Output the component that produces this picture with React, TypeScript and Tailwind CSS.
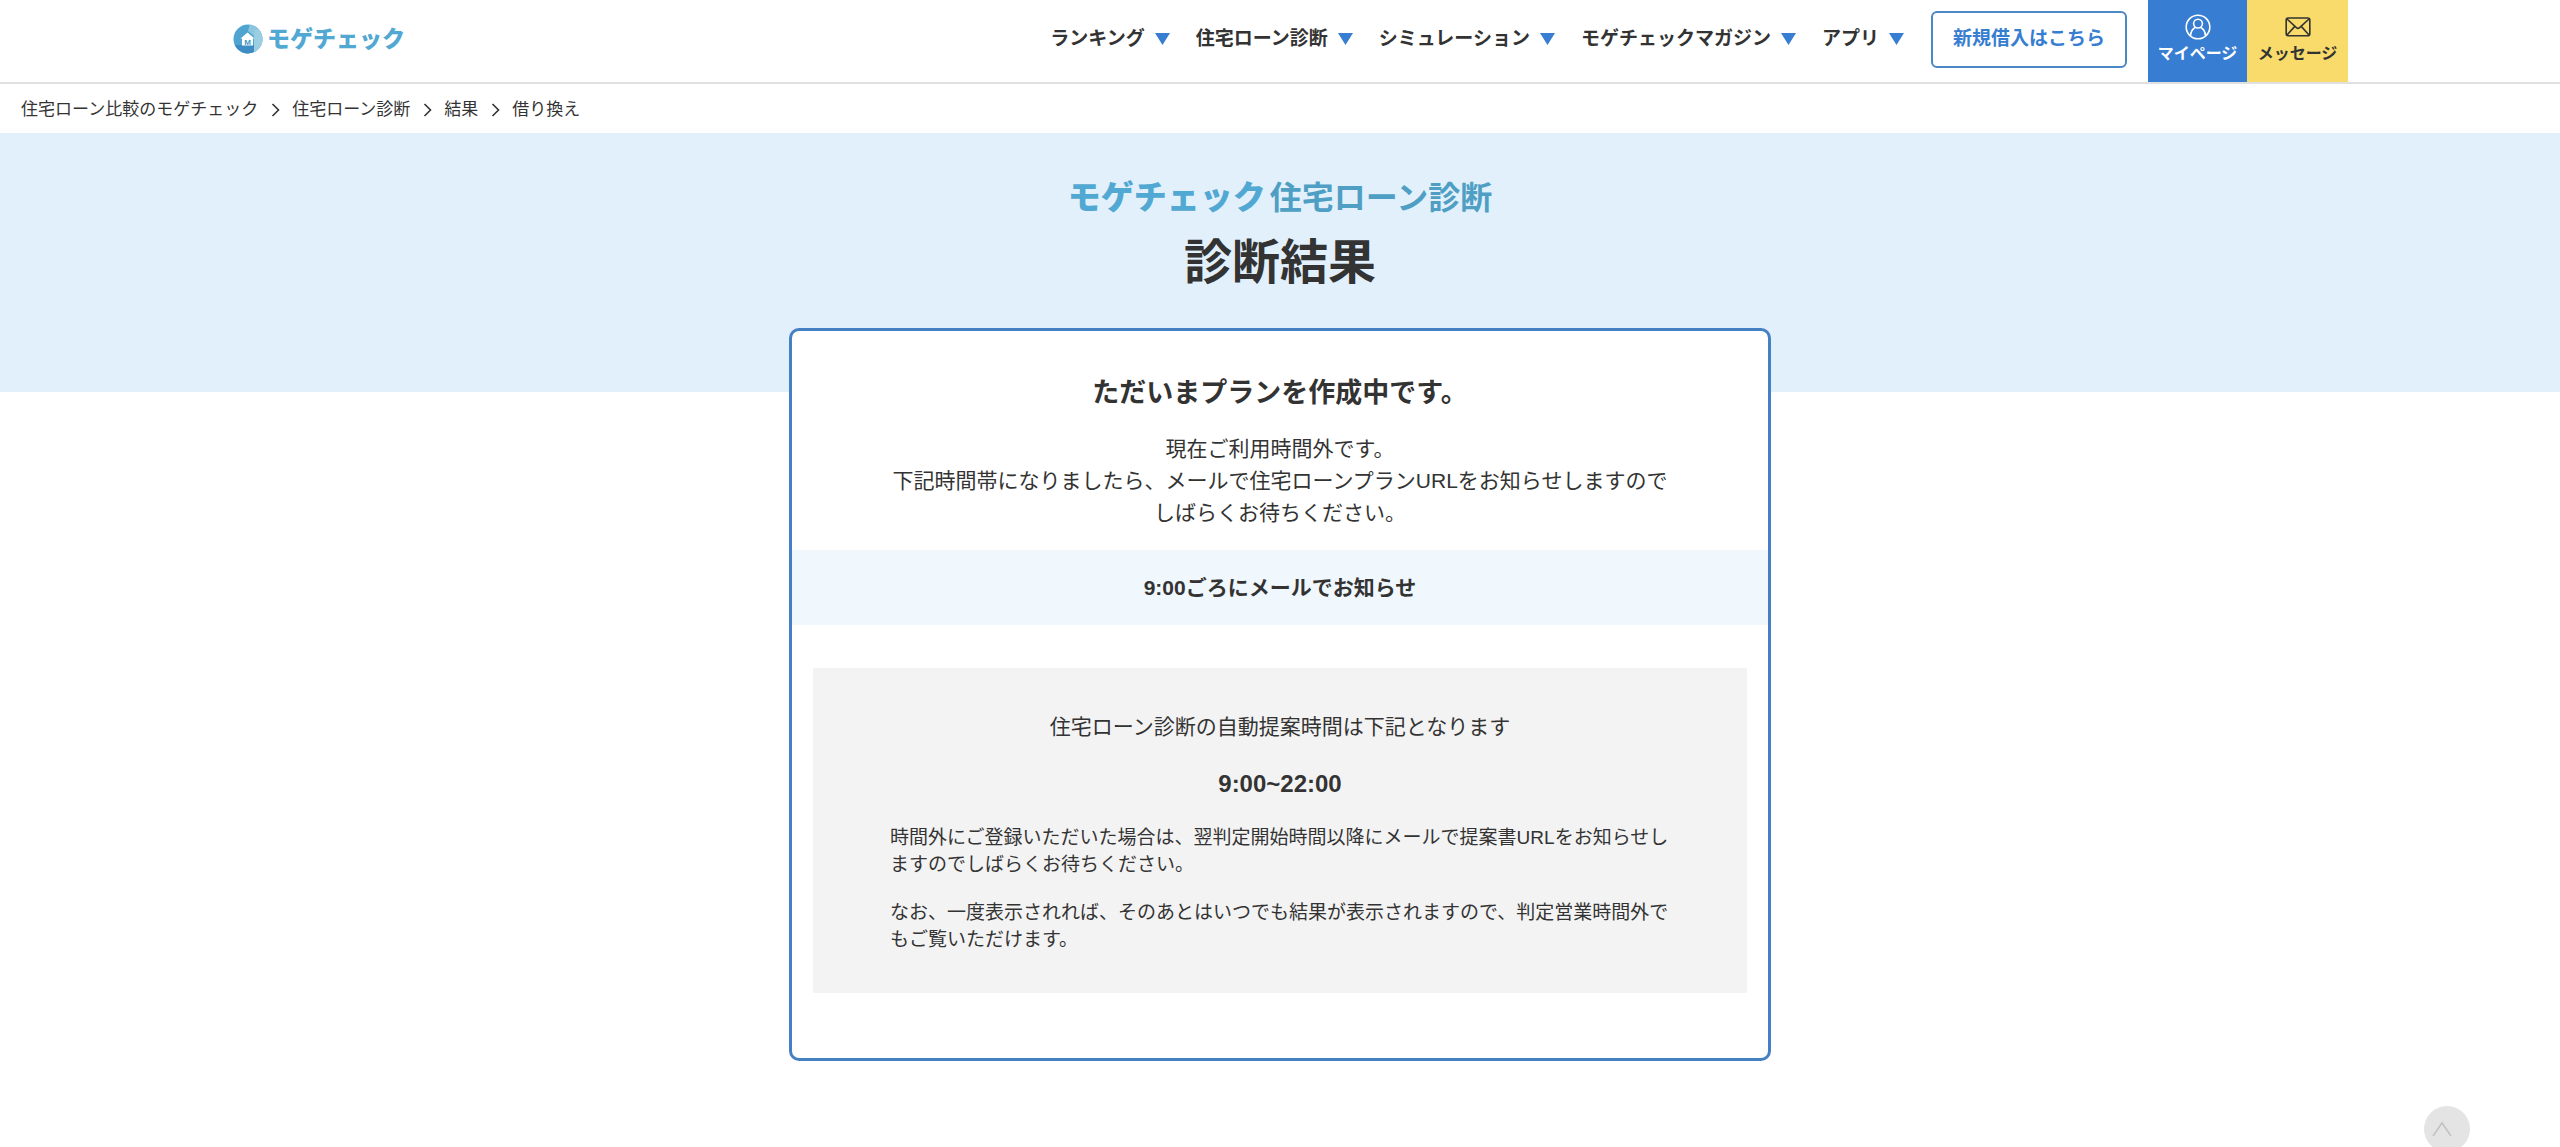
import React from "react";

const menus = ["ランキング", "住宅ローン診断", "シミュレーション", "モゲチェックマガジン", "アプリ"];

const crumbs = ["住宅ローン比較のモゲチェック", "住宅ローン診断", "結果"];

function LogoMark() {
  return (
    <svg viewBox="0 0 30 30" className="size-[30px]" aria-hidden="true">
      <defs>
        <clipPath id="mark">
          <circle cx="15" cy="15" r="14.5" />
        </clipPath>
      </defs>
      <g clipPath="url(#mark)">
        <rect width="30" height="30" fill="#4fa5cf" />
        <path d="M17 0H30V30H21V12L15 7Z" fill="#8cc6de" />
        <path d="M22 6L30 3V30H21V13Z" fill="#a3d2e4" opacity="0.7" />
        <path d="M0 21H21V30H0Z" fill="#3d8cc4" />
      </g>
      <path d="M7.5 14.5L14.5 8.5L21.5 14.5H20V21.5H9V14.5Z" fill="#fff" />
      <text
        x="14.5"
        y="21"
        textAnchor="middle"
        fontSize="8"
        fontWeight="700"
        fontFamily="Liberation Sans, sans-serif"
        fill="#3f95c8"
      >
        M
      </text>
    </svg>
  );
}

function UserIcon() {
  return (
    <svg viewBox="0 0 26 26" className="size-[26px]" fill="none" stroke="currentColor" strokeWidth="1.6" aria-hidden="true">
      <circle cx="13" cy="13" r="11.8" />
      <circle cx="13" cy="9.6" r="4.4" />
      <path d="M5.6 21.8C5.6 17.6 7.6 14.8 10.4 13.2M20.4 21.8C20.4 17.6 18.4 14.8 15.6 13.2" />
    </svg>
  );
}

function MailIcon() {
  return (
    <svg viewBox="0 0 26 26" className="size-[26px]" fill="none" stroke="currentColor" strokeWidth="1.6" aria-hidden="true">
      <rect x="1.2" y="4" width="23.6" height="17.8" rx="2" />
      <path d="M2 5L11.4 13.6Q13 15 14.6 13.6L24 5M2 21L9.8 12.4M24 21L16.2 12.4" />
    </svg>
  );
}

function Header() {
  return (
    <header className="border-b-2 border-[#e0e0e0] bg-white">
      <div className="mx-auto flex h-[82px] max-w-[2136px]">
        <div className="flex grow items-center pb-1">
          <a href="#" className="ml-[21px] flex items-center gap-1 text-[23px] leading-8 font-black text-[#51a8d2]">
            <LogoMark />
            モゲチェック
          </a>
          <nav className="ml-auto flex items-center gap-[26px]">
            {menus.map((m) => (
              <button key={m} type="button" className="flex items-center gap-2.5 text-[19px] leading-7 font-bold whitespace-nowrap">
                {m}
                <svg viewBox="0 0 15 12" className="h-3 w-[15px] fill-[#377dd1]" aria-hidden="true">
                  <path d="M0 0H15L7.5 12Z" />
                </svg>
              </button>
            ))}
          </nav>
          <a
            href="#"
            className="mr-[21px] ml-[27px] flex h-[57px] w-[196px] items-center justify-center rounded-md border-2 border-[#4a87c5] text-[19px] font-bold whitespace-nowrap text-[#377dd1]"
          >
            新規借入はこちら
          </a>
        </div>
        <a href="#" className="flex w-[99px] flex-col items-center bg-[#377dd1] pt-3.5 text-base leading-7 font-bold text-white">
          <UserIcon />
          マイページ
        </a>
        <a href="#" className="flex w-[101px] flex-col items-center bg-[#f9db6b] pt-3.5 text-base leading-7 font-bold">
          <MailIcon />
          メッセージ
        </a>
      </div>
    </header>
  );
}

function Breadcrumb() {
  return (
    <nav aria-label="パンくず" className="px-[21px] pt-[13px] pb-[11px]">
      <ol className="flex items-center text-[17px] leading-[25px]">
        {crumbs.map((c) => (
          <li key={c} className="flex items-center">
            <a href="#">{c}</a>
            <svg viewBox="0 0 9 14" className="mr-3 ml-[13px] h-3.5 w-[9px]" fill="none" stroke="#333" strokeWidth="1.6" aria-hidden="true">
              <path d="M1.5 1L7.5 7L1.5 13" />
            </svg>
          </li>
        ))}
        <li aria-current="page">借り換え</li>
      </ol>
    </nav>
  );
}

export default function App() {
  return (
    <div lang="ja" className="bg-white font-['Liberation_Sans','Noto_Sans_CJK_JP',sans-serif] text-[#333]">
      <Header />
      <Breadcrumb />
      <main>
        <div className="bg-[#e2f0fb] pt-[41px] pb-[93px] text-center">
          <p className="flex items-center justify-center gap-1 text-[32px] leading-[48px] font-bold text-[#4f9fc4]">
            <span className="text-[33px] font-black text-[#51a8d2]">モゲチェック</span>
            <span>住宅ローン診断</span>
          </p>
          <h1 className="mt-[5px] text-5xl leading-[72px] font-bold">診断結果</h1>
        </div>
        <section className="mx-auto -mt-16 max-w-[982px] rounded-[10px] border-3 border-[#4580c4] bg-white pb-[65px]">
          <h2 className="pt-[42px] text-center text-[27px] leading-10 font-bold">ただいまプランを作成中です。</h2>
          <p className="mt-5 text-center text-[21px] leading-8">
            現在ご利用時間外です。
            <br />
            下記時間帯になりましたら、メールで住宅ローンプランURLをお知らせしますので
            <br />
            しばらくお待ちください。
          </p>
          <p className="mt-[21px] bg-[#f0f7fd] pt-[22px] pb-[21px] text-center text-[21px] leading-8 font-bold">
            9:00ごろにメールでお知らせ
          </p>
          <div className="mx-[21px] mt-[43px] bg-[#f3f3f3] px-[77px] pt-[43px] pb-10">
            <p className="text-center text-[21px] leading-8">住宅ローン診断の自動提案時間は下記となります</p>
            <p className="mt-[25px] text-center text-2xl leading-8 font-bold">9:00~22:00</p>
            <p className="mt-6 text-[19px] leading-[27px]">
              時間外にご登録いただいた場合は、翌判定開始時間以降にメールで提案書URLをお知らせしますのでしばらくお待ちください。
            </p>
            <p className="mt-[21px] text-[19px] leading-[27px]">
              なお、一度表示されれば、そのあとはいつでも結果が表示されますので、判定営業時間外でもご覧いただけます。
            </p>
          </div>
        </section>
      </main>
      <button
        type="button"
        aria-label="ページの先頭へ"
        className="fixed right-[90px] -bottom-[5px] flex size-[46px] items-center justify-start rounded-full bg-[#e4e4e4] pl-2"
      >
        <svg viewBox="0 0 20 16" className="h-4 w-5" fill="none" stroke="#c2c2c2" strokeWidth="1.6" aria-hidden="true">
          <path d="M1 15L10 2L19 15" />
        </svg>
      </button>
    </div>
  );
}
